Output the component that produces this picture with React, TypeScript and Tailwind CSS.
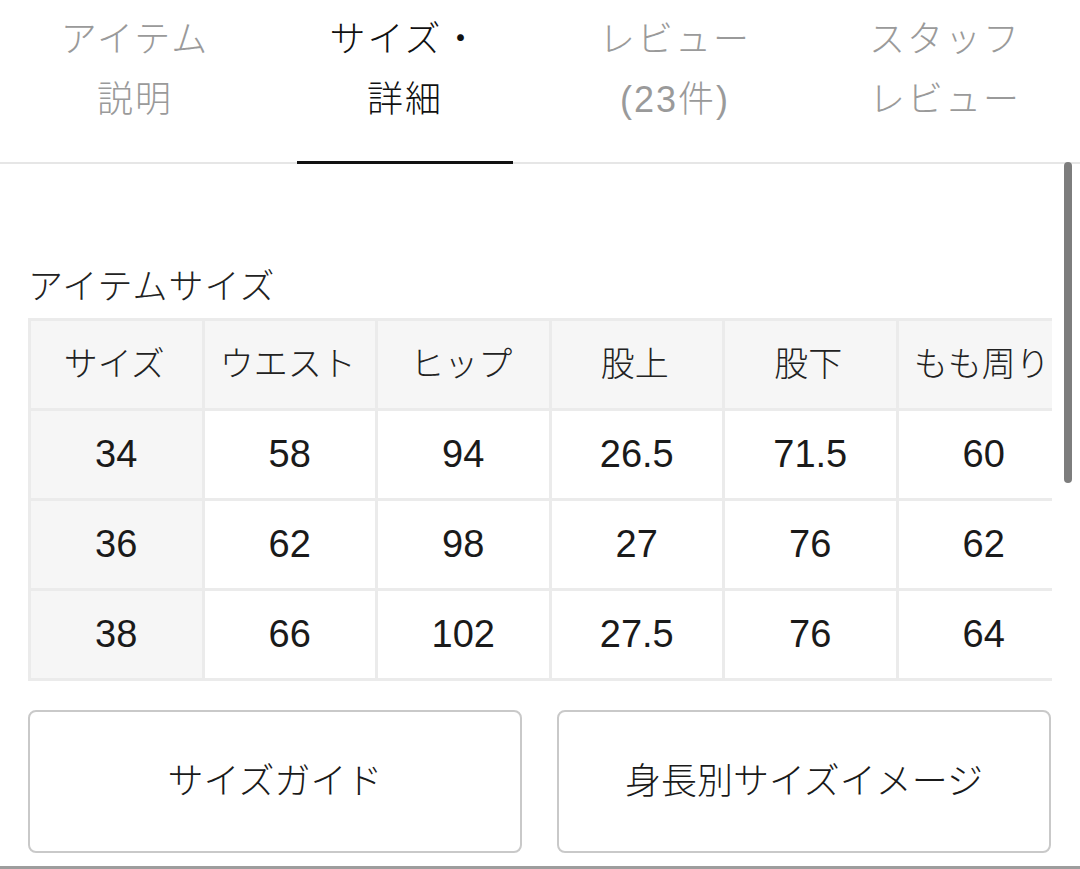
const FONT = '"Liberation Sans", "Noto Sans CJK JP", sans-serif';

const tabs = [
  { lines: ["アイテム", "説明"], active: false },
  { lines: ["サイズ・", "詳細"], active: true },
  { lines: ["レビュー", "(23件)"], active: false },
  { lines: ["スタッフ", "レビュー"], active: false },
];

const headers = ["サイズ", "ウエスト", "ヒップ", "股上", "股下", "もも周り"];
const rows = [
  ["34", "58", "94", "26.5", "71.5", "60"],
  ["36", "62", "98", "27", "76", "62"],
  ["38", "66", "102", "27.5", "76", "64"],
];

export default function App() {
  return (
    <div
      className="relative flex h-[869px] w-[1080px] flex-col overflow-hidden bg-white font-light"
      style={{ fontFamily: FONT }}
    >
      {/* tabs */}
      <div className="grid h-[164px] shrink-0 grid-cols-4 border-b-2 border-[#e6e6e6]">
        {tabs.map((t) => (
          <div key={t.lines[0]} className="relative flex flex-col items-center pt-[10px]">
            {t.lines.map((l) => (
              <span
                key={l}
                className={`text-[36px] leading-[60px] tracking-[2px] ${
                  t.active ? "text-[#111]" : "text-[#9a9a9a]"
                }`}
              >
                {l}
              </span>
            ))}
            {t.active && (
              <div className="absolute bottom-[-2px] left-[27px] right-[27px] h-[3px] bg-[#111]" />
            )}
          </div>
        ))}
      </div>

      {/* content */}
      <div className="flex flex-1 flex-col px-[28px]">
        <h2 className="mt-[103px] text-[35px] font-light leading-[40px] tracking-[1px] text-[#222]">
          アイテムサイズ
        </h2>

        <div className="mt-[11px] w-[1024px] overflow-hidden">
          <table className="border-collapse">
            <thead>
              <tr>
                {headers.map((h) => (
                  <th
                    key={h}
                    className="h-[90px] w-[173.5px] min-w-[173.5px] whitespace-nowrap border-[3px] border-[#ebebeb] bg-[#f6f6f6] pr-[4px] text-center text-[34px] font-light text-[#222]"
                  >
                    {h}
                  </th>
                ))}
              </tr>
            </thead>
            <tbody>
              {rows.map((r) => (
                <tr key={r[0]}>
                  {r.map((v, i) => (
                    <td
                      key={i}
                      className={`h-[90px] border-[3px] border-[#ebebeb] text-center text-[38px] text-[#1a1a1a] ${
                        i === 0 ? "bg-[#f6f6f6]" : "bg-white"
                      }`}
                    >
                      {v}
                    </td>
                  ))}
                </tr>
              ))}
            </tbody>
          </table>
        </div>

        <div className="mt-[29px] flex gap-[35px]">
          <button className="h-[143px] w-[494px] rounded-[8px] border-2 border-[#c9c9c9] bg-white text-[36px] text-[#1a1a1a]">
            サイズガイド
          </button>
          <button className="h-[143px] w-[494px] rounded-[8px] border-2 border-[#c9c9c9] bg-white text-[36px] text-[#1a1a1a]">
            身長別サイズイメージ
          </button>
        </div>
      </div>

      <div className="h-[3px] w-full shrink-0 bg-[#9d9d9d]" />

      {/* overlay scrollbar */}
      <div className="absolute left-[1064px] top-[162px] h-[321px] w-[8px] rounded-full bg-[#7d7d7d]" />
    </div>
  );
}
